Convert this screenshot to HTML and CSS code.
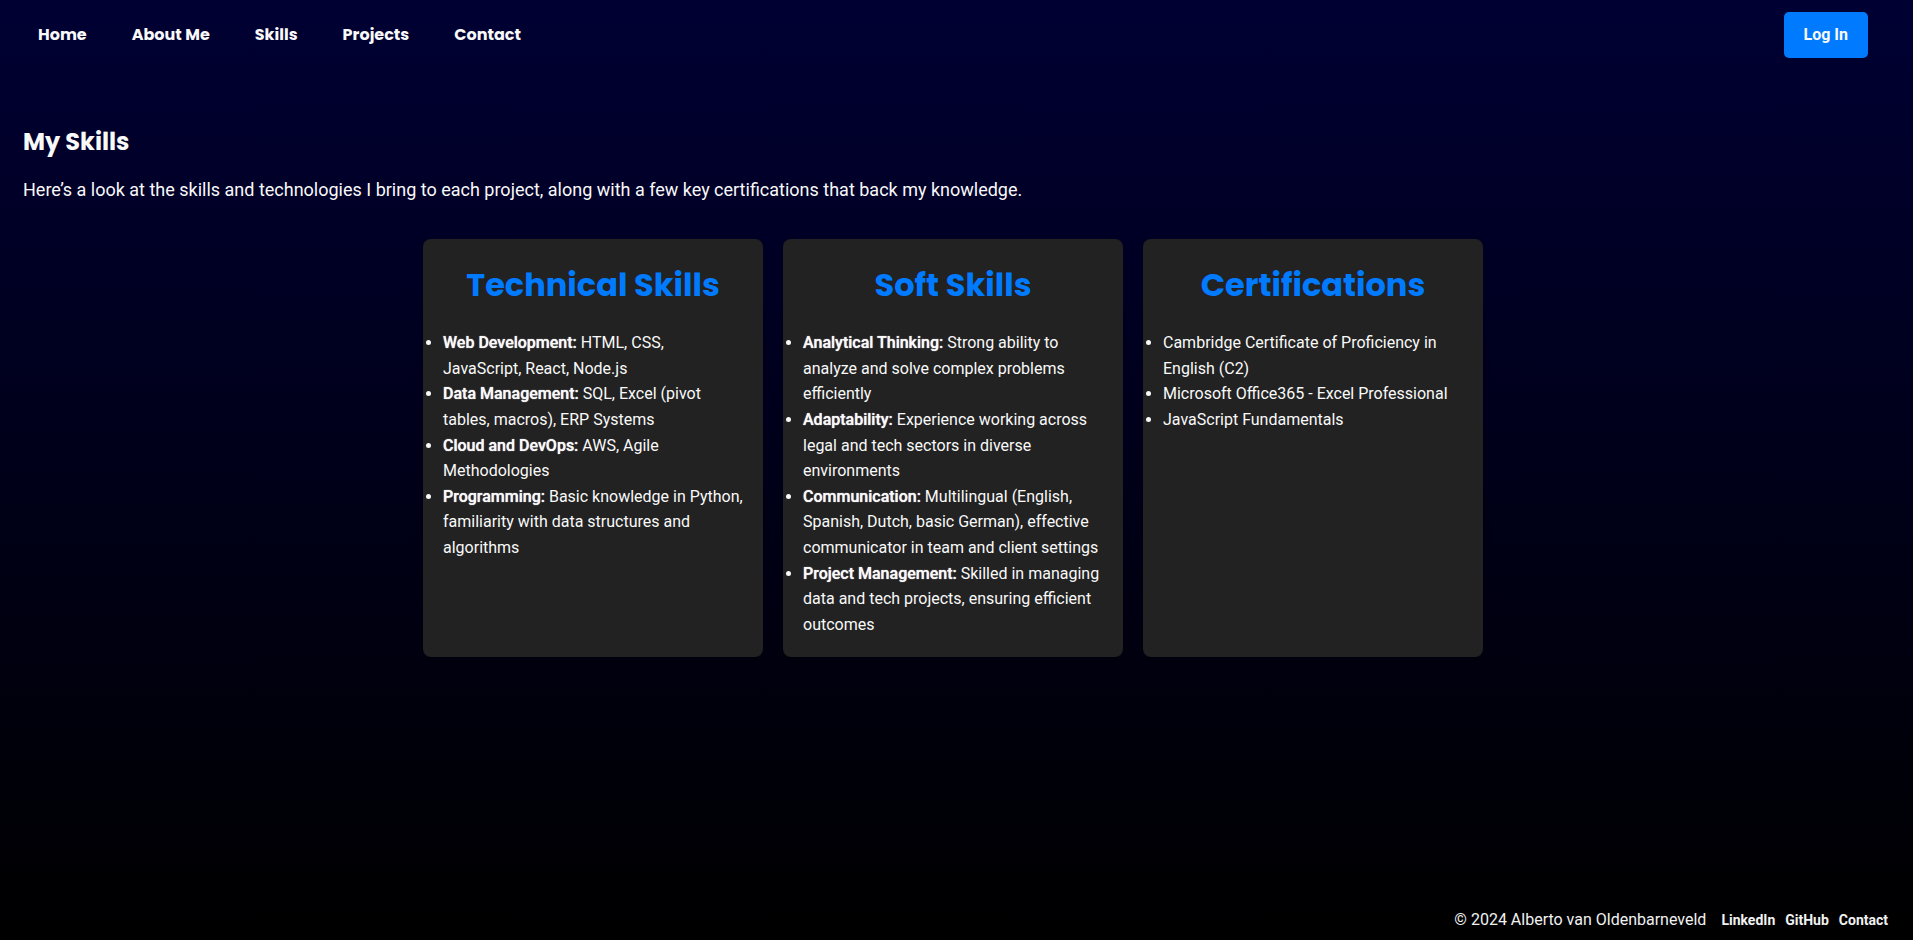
FILE: index.html
```
<!DOCTYPE html>
<html lang="en">
<head>
<meta charset="utf-8">
<meta name="viewport" content="width=device-width, initial-scale=1">
<title>My Skills</title>
<link rel="stylesheet" href="styles.css">
</head>
<body>
<header class="site-header">
  <nav class="nav">
    <a href="#">Home</a>
    <a href="#">About Me</a>
    <a href="#">Skills</a>
    <a href="#">Projects</a>
    <a href="#">Contact</a>
  </nav>
  <button class="login" type="button">Log In</button>
</header>
<main class="content">
  <h1 class="title">My Skills</h1>
  <p class="intro">Here’s a look at the skills and technologies I bring to each project, along with a few key certifications that back my knowledge.</p>
  <div class="cards">
    <section class="card">
      <h2>Technical Skills</h2>
      <ul>
        <li><strong>Web Development:</strong> HTML, CSS, JavaScript, React, Node.js</li>
        <li><strong>Data Management:</strong> SQL, Excel (pivot tables, macros), ERP Systems</li>
        <li><strong>Cloud and DevOps:</strong> AWS, Agile Methodologies</li>
        <li><strong>Programming:</strong> Basic knowledge in Python, familiarity with data structures and algorithms</li>
      </ul>
    </section>
    <section class="card">
      <h2>Soft Skills</h2>
      <ul>
        <li><strong>Analytical Thinking:</strong> Strong ability to analyze and solve complex problems efficiently</li>
        <li><strong>Adaptability:</strong> Experience working across legal and tech sectors in diverse environments</li>
        <li><strong>Communication:</strong> Multilingual (English, Spanish, Dutch, basic German), effective communicator in team and client settings</li>
        <li><strong>Project Management:</strong> Skilled in managing data and tech projects, ensuring efficient outcomes</li>
      </ul>
    </section>
    <section class="card">
      <h2>Certifications</h2>
      <ul>
        <li>Cambridge Certificate of Proficiency in English (C2)</li>
        <li>Microsoft Office365 - Excel Professional</li>
        <li>JavaScript Fundamentals</li>
      </ul>
    </section>
  </div>
</main>
<footer class="site-footer">
  <p>© 2024 Alberto van Oldenbarneveld</p>
  <div class="footer-links">
    <a href="#">LinkedIn</a>
    <a href="#">GitHub</a>
    <a href="#">Contact</a>
  </div>
</footer>
</body>
</html>
```
FILE: styles.css
```
* {
  box-sizing: border-box;
  margin: 0;
  padding: 0;
}

body {
  display: flex;
  flex-direction: column;
  min-height: 100vh;
  background: linear-gradient(to bottom, #000033, #000000);
  color: #f9f9f9;
  font-family: Roboto, sans-serif;
  font-size: 16px;
  line-height: 1.6;
}

a {
  color: inherit;
  text-decoration: none;
}

.site-header {
  display: flex;
  align-items: center;
  justify-content: space-between;
  padding: 12px 45px 12px 38px;
}

.nav {
  display: flex;
  flex-wrap: wrap;
  gap: 45px;
  font-family: Poppins, Inter, sans-serif;
  font-weight: 700;
}

.login {
  padding: 10px 20px;
  border: 0;
  border-radius: 5px;
  background: #007bff;
  color: #f9f9f9;
  font: 700 16px/26px Roboto, sans-serif;
  cursor: pointer;
}

.content {
  flex: 1;
  padding: 53px 30px 24px 23px;
}

.title {
  margin-bottom: 14px;
  font-family: Poppins, Inter, sans-serif;
  font-size: 24px;
  font-weight: 700;
  line-height: 38px;
}

.intro {
  margin-bottom: 35px;
  font-size: 18px;
  line-height: 29px;
}

.cards {
  display: flex;
  flex-wrap: wrap;
  justify-content: center;
  gap: 20px;
}

.card {
  width: 340px;
  padding: 20px;
  border-radius: 8px;
  background: #222222;
  box-shadow: 0 4px 8px rgba(0, 0, 0, 0.2);
}

.card h2 {
  margin-bottom: 20px;
  color: #007bff;
  font-family: Poppins, Inter, sans-serif;
  font-size: 32px;
  font-weight: 700;
  text-align: center;
}

.card strong {
  font-weight: 500;
  text-shadow: 0 0 1px currentColor;
}

.site-footer {
  display: flex;
  align-items: center;
  justify-content: flex-end;
  gap: 15px;
  padding: 8px 25px 7px;
  color: #f1f1f1;
}

.footer-links {
  display: flex;
  gap: 10px;
  font-size: 14px;
  font-weight: 700;
}
```
